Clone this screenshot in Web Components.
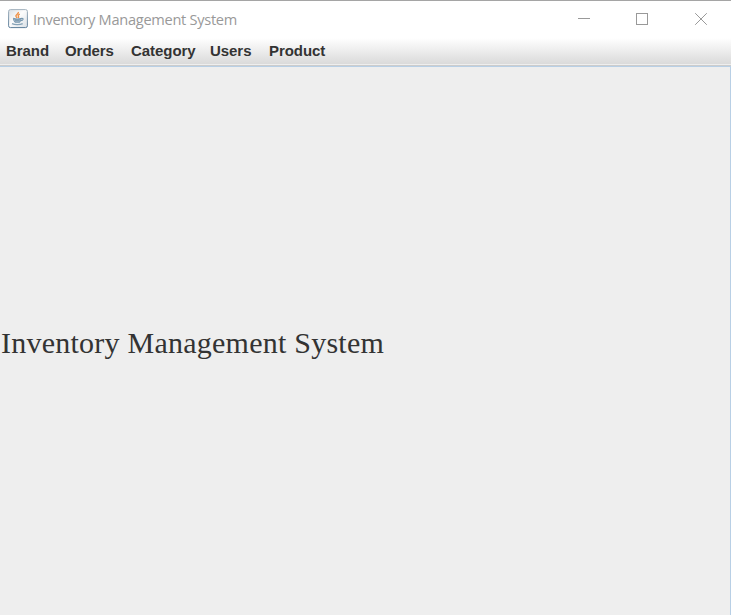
<!DOCTYPE html>
<html lang="en"><head><meta charset="utf-8"><title>Inventory Management System</title>
<style>html,body{margin:0;height:100%;overflow:hidden}</style></head>
<body>
<app-window>
<title-bar slot="title">Inventory Management System</title-bar>
<menu-bar slot="menu"><menu-item style="width:59px">Brand</menu-item><menu-item style="width:66px">Orders</menu-item><menu-item style="width:79px">Category</menu-item><menu-item style="width:59px">Users</menu-item><menu-item>Product</menu-item></menu-bar>
<content-pane>Inventory Management System</content-pane>
</app-window>
<script>
const define = (name, html) => customElements.define(name, class extends HTMLElement {
  constructor() { super(); this.attachShadow({mode: 'open'}).innerHTML = html; }
});
define('app-window', `<style>
:host{display:flex;flex-direction:column;width:731px;height:615px;box-sizing:border-box;border-top:1px solid #a5a5a5;background:#fff;overflow:hidden}
</style><slot name="title"></slot><slot name="menu"></slot><slot></slot>`);
define('title-bar', `<style>
:host{display:flex;height:36px;flex:none;align-items:center;padding-left:8px;font:15px/20px "Open Sans","Noto Sans",sans-serif;color:#999}
.icon{flex:none;margin-right:5px;display:block}
.t{flex:1;white-space:nowrap;font-size:14.6px;letter-spacing:-.29px}
.c{flex:none;display:block}
</style>
<svg class="icon" width="20" height="20" viewBox="0 0 20 20">
<defs><linearGradient id="g" x1="0" y1="0" x2="1" y2="1"><stop offset="0" stop-color="#d9dfe4"/><stop offset=".45" stop-color="#fcfcfc"/><stop offset="1" stop-color="#d8dfe5"/></linearGradient>
<linearGradient id="b" x1="0" y1="0" x2="0" y2="1"><stop offset="0" stop-color="#a3b2be"/><stop offset="1" stop-color="#5b7d99"/></linearGradient></defs>
<rect x=".6" y=".6" width="18.8" height="18" rx="1.8" fill="url(#g)" stroke="url(#b)" stroke-width="1"/>
<path d="M10.3 3c.8 1.7-2.5 2.5-2.4 4 .1 1 .9 1.3 1.2 2M11.8 5.2c-1.6.7-2.1 1.4-1.3 2.3.4.6.2 1-.3 1.5" fill="none" stroke="#ee9148" stroke-width="1.4"/>
<path d="M5 9.3c2.7.8 6 .8 8.5 0M5.5 9.8c.3 1.7 1 2.7 1.7 3.4h4.2c1-.6 1.5-1.7 1.7-3.2M13.4 9.4c2.5-.4 2.2 2-.8 2.3" fill="none" stroke="#7596ae" stroke-width="1.1"/>
<path d="M6.3 10.6h6.3M6.8 12h5" stroke="#829fb4" stroke-width="1.3"/><path d="M4 14.6c2.7 1.4 7.8 1.4 10.7 0" fill="none" stroke="#86a3b7" stroke-width="1.4"/>
</svg><span class="t"><slot></slot></span>
<svg class="c" width="160" height="36" viewBox="571 1 160 36" fill="none" stroke="#999" stroke-width="1">
<path d="M578 18.5h12M636.5 13.5h11v11h-11z" shape-rendering="crispEdges"/><path d="M695.2 13.2l11.6 11.6M706.8 13.2l-11.6 11.6"/></svg>`);
define('menu-bar', `<style>
:host{display:flex;flex:none;height:29px;box-sizing:border-box;padding-left:6px;border-bottom:1px solid #ccc;background:linear-gradient(#eee,#eee) bottom/100% 1px no-repeat,linear-gradient(#fff,#fff 1px,#dadada 27px)}
</style><slot></slot>`);
define('menu-item', `<style>
:host{display:block;flex:none;font:bold 15px/27px "Liberation Sans",Arial,sans-serif;letter-spacing:-.05px;color:#333;white-space:nowrap}
</style><slot></slot>`);
define('content-pane', `<style>
:host{display:flex;flex:1;align-items:center;box-sizing:border-box;padding-top:4px;border-top:1px solid #b8cfe5;border-right:1px solid #b8cfe5;background:#eee;font:30px/40px "Liberation Serif","Times New Roman",serif;letter-spacing:.24px;color:#333}
span{white-space:nowrap;padding-left:1px}
</style><span><slot></slot></span>`);
</script></body></html>
